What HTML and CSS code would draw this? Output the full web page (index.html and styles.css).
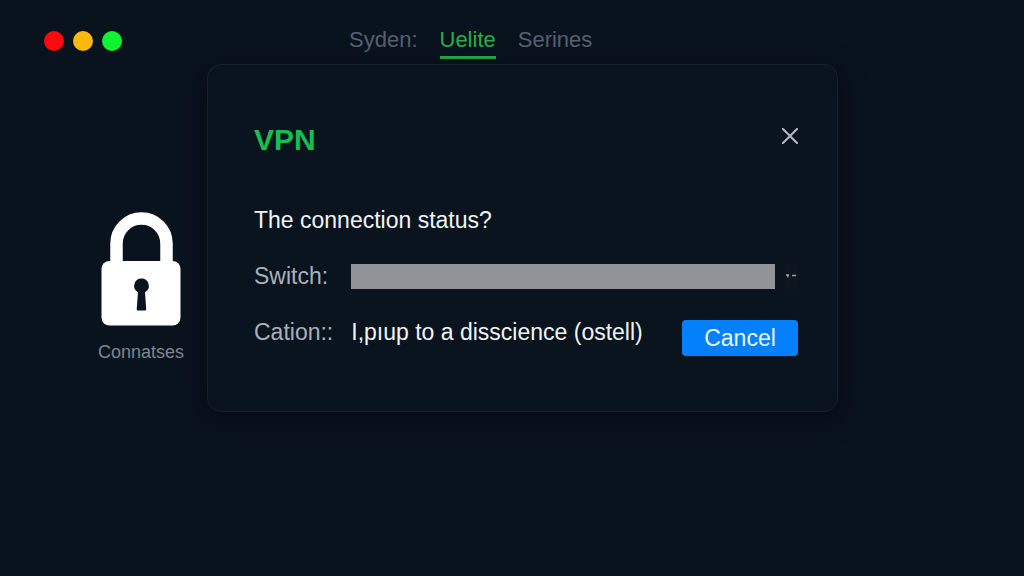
FILE: index.html
```
<!DOCTYPE html>
<html lang="en">
<head>
  <meta charset="UTF-8">
  <meta name="viewport" content="width=device-width, initial-scale=1">
  <title>VPN</title>
  <link rel="stylesheet" href="styles.css">
</head>
<body>
  <div class="window">
    <header class="titlebar">
      <div class="lights">
        <span class="light light-red"></span>
        <span class="light light-yellow"></span>
        <span class="light light-green"></span>
      </div>
      <nav class="tabs">
        <a class="tab" href="#">Syden:</a>
        <a class="tab active" href="#">Uelite</a>
        <a class="tab" href="#">Serines</a>
      </nav>
    </header>

    <aside class="sidebar">
      <div class="status">
        <svg class="lock" viewBox="0 0 80 114" aria-hidden="true">
          <path d="M15.500 56V31.500a25 25 0 0 1 50 0V56" fill="none" stroke="#fff" stroke-width="12.500"/>
          <rect x="0.500" y="49" width="79" height="64.500" rx="8" fill="#fff"/>
          <path d="M40.500 66.500a7.300 7.300 0 0 1 3.500 13.700l1.200 16.800q0 1.500-1.500 1.500h-6.500q-1.500 0-1.500-1.500l1.300-16.800a7.300 7.300 0 0 1 3.500-13.700z" fill="#0a131e"/>
        </svg>
        <span class="status-label">Connatses</span>
      </div>
    </aside>

    <main class="dialog">
      <div class="dialog-header">
        <h1>VPN</h1>
        <button class="close" type="button" aria-label="Close">
          <svg viewBox="0 0 16 16" aria-hidden="true">
            <path d="M1 1l14 14M15 1L1 15" fill="none" stroke="#b4bbc5" stroke-width="2" stroke-linecap="round"/>
          </svg>
        </button>
      </div>
      <p class="question">The connection status?</p>
      <form class="form">
        <label for="switch">Switch:</label>
        <div class="field">
          <input id="switch" class="switch" type="text">
          <button class="more" type="button" aria-label="More">
            <svg viewBox="0 0 12 4" aria-hidden="true">
              <path d="M1 1h3M2 2.500h1.500M7 1.500h4" stroke="#9aa1ab" stroke-width="1.500"/>
            </svg>
          </button>
        </div>
        <span class="label">Cation::</span>
        <div class="field field-last">
          <span class="value">I,pıup to a disscience (ostell)</span>
          <button class="cancel" type="button">Cancel</button>
        </div>
      </form>
    </main>
  </div>
</body>
</html>
```

FILE: styles.css
```
* {
  box-sizing: border-box;
}

body {
  margin: 0;
  min-height: 100vh;
  background-color: #09131d;
  color: #f1f4f8;
  font-family: "Liberation Sans", Arial, sans-serif;
  font-size: 23px;
  line-height: 28px;
}

button,
input {
  font: inherit;
  border: 0;
  padding: 0;
}

.window {
  display: grid;
  grid-template-columns: 1fr minmax(0, 631px) 186px;
}

/* Title bar */
.titlebar {
  grid-column: 1 / -1;
  display: grid;
  grid-template-columns: subgrid;
  padding-top: 26px;
  height: 64px;
}

.lights {
  display: flex;
  gap: 9px;
  padding: 5px 0 0 44px;
}

.light {
  width: 20px;
  height: 20px;
  border-radius: 50%;
}

.light-red {
  background-color: #fb0a10;
}

.light-yellow {
  background-color: #fdb80c;
}

.light-green {
  background-color: #0df433;
}

.tabs {
  display: flex;
  align-items: flex-start;
  gap: 22px;
  padding-left: 142px;
  font-size: 22px;
}

.tab {
  color: #556070;
  text-decoration: none;
  border-bottom: 3px solid transparent;
  padding-bottom: 2px;
}

.tab.active {
  color: #25b04c;
  border-color: #2fb655;
}

/* Lock and its label */
.sidebar {
  display: flex;
  justify-content: flex-end;
  padding: 148px 23px 0 0;
}

.status {
  display: flex;
  flex-direction: column;
  align-items: center;
  gap: 12px;
}

.lock {
  width: 80px;
  height: 114px;
}

.status-label {
  color: #7e8792;
  font-size: 18px;
}

/* Dialog */
.dialog {
  padding: 57px 39px 55px 46px;
  background-color: #0a141e;
  border: 1px solid #17212b;
  border-radius: 14px;
  box-shadow: 0 6px 24px #050c15;
}

.dialog-header {
  display: flex;
  justify-content: space-between;
  margin-bottom: 48px;
}

h1 {
  margin: 0;
  color: #19bd50;
  font-size: 30px;
  line-height: 36px;
}

.close {
  width: 16px;
  height: 28px;
  background: none;
}

.close svg {
  display: block;
  width: 16px;
  height: 16px;
}

.question {
  margin: 0 0 24px;
}

.form {
  display: grid;
  grid-template-columns: auto 1fr;
  column-gap: 18px;
  row-gap: 20px;
  align-items: start;
}

.form label,
.label {
  padding-top: 4px;
  color: #a9b0ba;
}

.field {
  display: flex;
  align-items: center;
  justify-content: space-between;
  gap: 10px;
  min-height: 36px;
}

.field-last {
  align-items: flex-end;
  min-height: 42px;
}

.switch {
  flex: 1;
  min-width: 0;
  height: 25px;
  background-color: #929398;
}

.more {
  width: 13px;
  height: 25px;
  background-color: #0d151f;
}

.more svg {
  display: block;
  width: 12px;
  height: 4px;
}

.value {
  align-self: flex-start;
  padding-top: 4px;
}

.cancel {
  width: 116px;
  height: 36px;
  border-radius: 4px;
  background-color: #0480fa;
  color: #eaf5ff;
}
```
